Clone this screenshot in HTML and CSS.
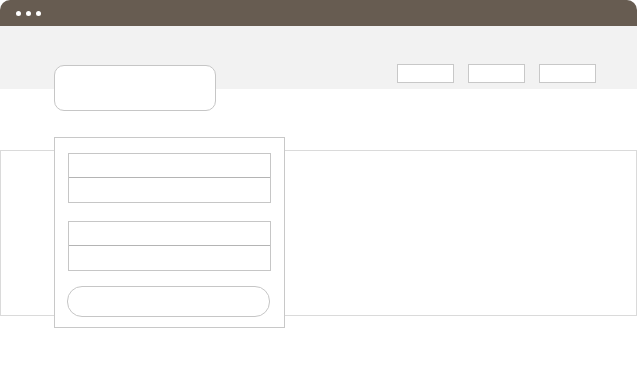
FILE: index.html
```html
<!DOCTYPE html>
<html lang="en">
<head>
  <meta charset="UTF-8">
  <meta name="viewport" content="width=device-width, initial-scale=1.0">
  <title>Login Wireframe</title>
  <link rel="stylesheet" href="styles.css">
</head>
<body>
  <div class="frame">
    <div class="titlebar">
      <span class="dot"></span>
      <span class="dot"></span>
      <span class="dot"></span>
    </div>

    <div class="header">
      <div class="logo"></div>
      <nav class="nav">
        <div class="navitem"></div>
        <div class="navitem"></div>
        <div class="navitem"></div>
      </nav>
    </div>

    <div class="stage">
      <div class="band"></div>
      <div class="panel">
        <div class="fieldgroup">
          <div class="field"></div>
          <div class="field"></div>
        </div>
        <div class="fieldgroup">
          <div class="field"></div>
          <div class="field"></div>
        </div>
        <div class="submit"></div>
      </div>
    </div>
  </div>
</body>
</html>
```

FILE: styles.css
```css
body {
  margin: 0;
  background-color: #fff;
  font-family: "Liberation Sans", Arial, sans-serif;
}

.frame {
  width: 637px;
}

.titlebar {
  height: 26px;
  background-color: #675c51;
  border-radius: 10px 10px 0 0;
  display: flex;
  align-items: center;
  gap: 5px;
  padding-left: 16px;
}

.dot {
  width: 5px;
  height: 5px;
  border-radius: 50%;
  background-color: #fff;
}

.header {
  height: 63px;
  background-color: #f2f2f2;
  display: flex;
  align-items: flex-start;
  padding-left: 54px;
}

.logo {
  box-sizing: border-box;
  width: 162px;
  height: 46px;
  margin-top: 39px;
  background-color: #fff;
  border: 1px solid #c6c6c6;
  border-radius: 10px;
}

.nav {
  display: flex;
  gap: 14px;
  margin-left: 181px;
  margin-top: 38px;
}

.navitem {
  box-sizing: border-box;
  width: 57px;
  height: 19px;
  background-color: #fff;
  border: 1px solid #c8c8c8;
}

.stage {
  display: grid;
  margin-top: 48px;
}

.band,
.panel {
  grid-area: 1 / 1;
}

.band {
  box-sizing: border-box;
  width: 637px;
  height: 166px;
  margin-top: 13px;
  border: 1px solid #dadada;
}

.panel {
  box-sizing: border-box;
  width: 231px;
  height: 191px;
  margin-left: 54px;
  padding: 15px 13px 0 13px;
  background-color: #fff;
  border: 1px solid #c8c8c8;
  display: flex;
  flex-direction: column;
}

.fieldgroup {
  border: 1px solid #c6c6c6;
  margin-bottom: 18px;
}

.field {
  height: 23px;
}

.field + .field {
  height: 24px;
  border-top: 1px solid #b4b4b4;
}

.fieldgroup + .fieldgroup {
  margin-bottom: 15px;
}

.submit {
  box-sizing: border-box;
  height: 31px;
  margin-left: -1px;
  margin-right: 1px;
  border: 1px solid #c6c6c6;
  border-radius: 15px;
}
```
